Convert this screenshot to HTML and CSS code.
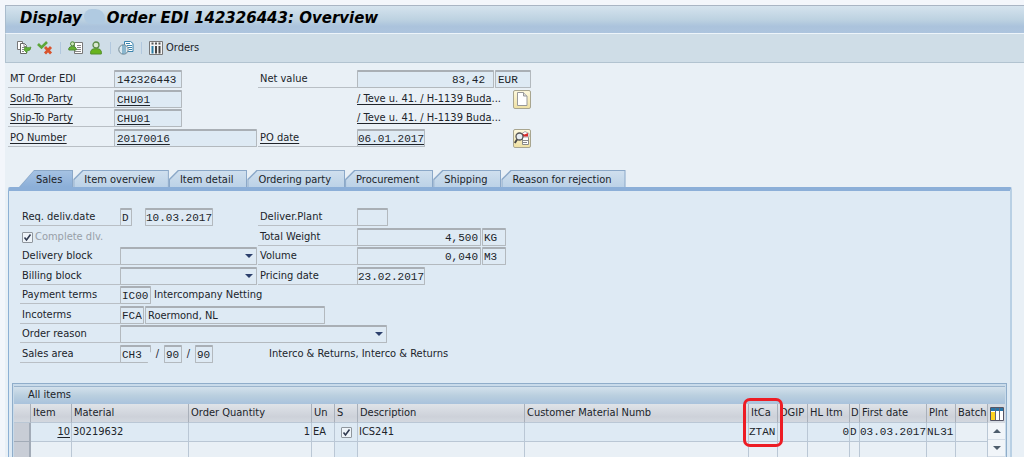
FILE: index.html
```html
<!DOCTYPE html>
<html lang="en">
<head>
<meta charset="utf-8">
<title>Display Order EDI 142326443: Overview</title>
<link rel="stylesheet" href="styles.css">
</head>
<body>
<div class="page">
  <header class="titlebar">
    <h1>Display<span class="blank"></span>Order EDI 142326443: Overview</h1>
  </header>
  <div class="toolbar">
    <button class="tool" type="button" aria-label="Display document flow">
      <svg width="16" height="14" viewBox="0 0 16 14"><path d="M1.500.5h5v8h-5z" fill="#fff" stroke="#777"/><path d="M4.500 2.500h4l2 2v8h-6z" fill="#fff" stroke="#666"/><path d="M8 2.500v3h3M6 6.500h3M6 8.500h3M6 10.500h2" fill="none" stroke="#888"/><path d="M9 6q4 1 6 0 0 4-4 4v2L8 9z" fill="#5fae35" stroke="#4a8c2b" stroke-width=".6"/></svg>
    </button>
    <button class="tool" type="button" aria-label="Reject items">
      <svg width="16" height="14" viewBox="0 0 16 14"><path d="M1 3l3.500 3.500L10 1" fill="none" stroke="#5da63a" stroke-width="2.600"/><path d="M8 6l6 6.500M14 6l-6 6.500" stroke="#d9532c" stroke-width="2.800"/></svg>
    </button>
    <span class="sep"></span>
    <button class="tool" type="button" aria-label="Header details">
      <svg width="16" height="14" viewBox="0 0 16 14"><path d="M6.500 1.500h8v11h-8z" fill="#fff" stroke="#777"/><path d="M9 4.500h4M9 6.500h4M7 8.500h6M7 10.500h6" stroke="#888"/><circle cx="4.500" cy="2.800" r="2" fill="#cde5bb" stroke="#4e8a37"/><path d="M.8 9V7.500Q1 5.500 4.500 5.500T8.200 7.500V9z" fill="#66b32e" stroke="#4e8a37"/></svg>
    </button>
    <button class="tool" type="button" aria-label="Sold-to party">
      <svg width="14" height="14" viewBox="0 0 14 14"><circle cx="7" cy="4" r="3" fill="#dbe9d0" stroke="#5a8a48" stroke-width="1.300"/><path d="M1.700 13v-2.500Q2.500 7.800 5 7.800h4q2.500 0 3.300 2.700V13z" fill="#69b41e" stroke="#558f2c"/></svg>
    </button>
    <span class="sep"></span>
    <button class="tool" type="button" aria-label="Document overview">
      <svg width="16" height="14" viewBox="0 0 16 14"><path d="M6.500.5h6l2.500 2v8H6.500z" fill="#fff" stroke="#3b84ad"/><path d="M8 2.500h4M9 4.500h5M10 6.500h4M11 8.500h3" stroke="#3b84ad"/><circle cx="5.500" cy="8.500" r="4.700" fill="#dce9ef" stroke="#70848f"/><path d="M5 4v9M7 4.500v8" stroke="#3b84ad"/></svg>
    </button>
    <span class="sep"></span>
    <button class="tool" type="button">
      <svg width="14" height="14" viewBox="0 0 14 14"><path d="M.5.500h13v13H.5z" fill="#f4f4f4" stroke="#777"/><path d="M3.500 5v7.500" stroke="#2b7ca5" stroke-width="2"/><path d="M7 5v7.500M10.500 5v7.500" stroke="#444" stroke-width="2"/><path d="M2.500 2.500h2M6 2.500h2M9.500 2.500h2" stroke="#555" stroke-width="2"/></svg>
      <span>Orders</span>
    </button>
  </div>

  <main class="content">
    <div class="form head-form">
      <label class="lbl c1" for="edi">MT Order EDI</label>
      <div class="val c2"><input class="w68" id="edi" value="142326443" readonly></div>
      <label class="lbl c3" for="net">Net value</label>
      <div class="val c4"><input class="w137 num roomy" id="net" value="83,42" readonly><input class="w36" aria-label="Currency" value="EUR" readonly></div>

      <label class="lbl c1 link" for="sold">Sold-To Party</label>
      <div class="val c2"><input class="w68 link" id="sold" value="CHU01" readonly></div>
      <div class="val c4"><a class="addr" href="#">/ Teve u. 41. / H-1139 Buda</a><span class="dots">...</span>
        <button class="square" type="button" aria-label="Texts"><svg width="12" height="14" viewBox="0 0 12 14"><path d="M1.500.5h6l3.500 3.500v9.500H1.500z" fill="#fff" stroke="#999"/><path d="M7.500.5V4H11" fill="#ddd" stroke="#999"/></svg></button></div>

      <label class="lbl c1 link" for="ship">Ship-To Party</label>
      <div class="val c2"><input class="w68 link" id="ship" value="CHU01" readonly></div>
      <div class="val c4"><a class="addr" href="#">/ Teve u. 41. / H-1139 Buda</a><span class="dots">...</span></div>

      <label class="lbl c1 link" for="pon">PO Number</label>
      <div class="val c2"><input class="w143 link" id="pon" value="20170016" readonly></div>
      <label class="lbl c3 link" for="pod">PO date</label>
      <div class="val c4"><input class="w68 link" id="pod" value="06.01.2017" readonly>
        <button class="square last" type="button" aria-label="Partner details"><svg width="16" height="14" viewBox="0 0 16 14"><path d="M8.500 5.500h6v8h-6z" fill="#fff" stroke="#888"/><path d="M8 6V2.500l3-2 4 2V6z" fill="#fff" stroke="#aaa"/><path d="M7 2l3.500 1.500L14 2v3.500H7z" fill="#d92b2b"/><circle cx="5.500" cy="5.500" r="3.500" fill="#e7edf1" stroke="#555" stroke-width="1.300"/><path d="M3 8.500L.8 12" stroke="#444" stroke-width="2"/><path d="M9 9.500h5M9 11.500h4" stroke="#888"/></svg></button></div>
    </div>

    <nav class="tabs" role="tablist">
      <button class="tab active" role="tab" aria-selected="true" type="button">Sales</button>
      <button class="tab" role="tab" type="button">Item overview</button>
      <button class="tab" role="tab" type="button">Item detail</button>
      <button class="tab" role="tab" type="button">Ordering party</button>
      <button class="tab" role="tab" type="button">Procurement</button>
      <button class="tab" role="tab" type="button">Shipping</button>
      <button class="tab" role="tab" type="button">Reason for rejection</button>
    </nav>

    <section class="panel">
      <div class="form sales-form">
        <label class="lbl c1" for="req">Req. deliv.date</label>
        <div class="val c2"><input class="w12" aria-label="Date type" value="D" readonly><input class="w68 gap-left" id="req" value="10.03.2017" readonly></div>
        <label class="lbl c3" for="plant">Deliver.Plant</label>
        <div class="val c4"><input class="w31" id="plant" readonly></div>

        <label class="check c1"><input type="checkbox" checked disabled>Complete dlv.</label>
        <label class="lbl c3" for="weight">Total Weight</label>
        <div class="val c4"><input class="w124 num" id="weight" value="4,500" readonly><input class="w24" aria-label="Weight unit" value="KG" readonly></div>

        <label class="lbl c1" for="dblock">Delivery block</label>
        <div class="val c2"><select class="w137" id="dblock"><option></option></select></div>
        <label class="lbl c3" for="vol">Volume</label>
        <div class="val c4"><input class="w124 num" id="vol" value="0,040" readonly><input class="w24" aria-label="Volume unit" value="M3" readonly></div>

        <label class="lbl c1" for="bblock">Billing block</label>
        <div class="val c2"><select class="w137" id="bblock"><option></option></select></div>
        <label class="lbl c3" for="pdate">Pricing date</label>
        <div class="val c4"><input class="w68" id="pdate" value="23.02.2017" readonly></div>

        <label class="lbl c1" for="pay">Payment terms</label>
        <div class="val wide"><input class="w31" id="pay" value="IC00" readonly><span class="note">Intercompany Netting</span></div>

        <label class="lbl c1" for="inco">Incoterms</label>
        <div class="val wide"><input class="w24" id="inco" value="FCA" readonly><input class="w180 sans" aria-label="Incoterms location" value="Roermond, NL" readonly></div>

        <label class="lbl c1" for="reason">Order reason</label>
        <div class="val wide"><select class="w267" id="reason"><option></option></select></div>

        <label class="lbl c1" for="area">Sales area</label>
        <div class="val wide"><input class="w31 cut" id="area" value="CH3" readonly><span class="slash">/</span><input class="w18" aria-label="Distribution channel" value="90" readonly><span class="slash">/</span><input class="w18" aria-label="Division" value="90" readonly><span class="area-text">Interco &amp; Returns, Interco &amp; Returns</span></div>
      </div>

      <section class="items">
        <h2>All items</h2>
        <div class="grid-wrap">
          <table>
            <colgroup><col class="k17"><col class="k41"><col class="k117"><col class="k123"><col class="k23"><col class="k23"><col class="k167"><col><col class="k29"><col class="k30"><col class="k42"><col class="k10"><col class="k67"><col class="k29"><col class="k32"></colgroup>
            <thead>
              <tr><th class="sel"></th><th>Item</th><th>Material</th><th>Order Quantity</th><th>Un</th><th>S</th><th>Description</th><th>Customer Material Numb</th><th class="marked">ItCa<span class="mark"></span></th><th>DGIP</th><th>HL Itm</th><th class="tight">D</th><th>First date</th><th>Plnt</th><th>Batch</th></tr>
            </thead>
            <tbody>
              <tr><td class="sel"></td><td class="num"><a href="#">10</a></td><td>30219632</td><td class="num">1</td><td>EA</td><td class="mid"><input type="checkbox" aria-label="Status" checked></td><td>ICS241</td><td></td><td class="mono">ZTAN</td><td></td><td class="num mono">0</td><td class="mono">D</td><td class="mono">03.03.2017</td><td class="mono">NL31</td><td class="pale"></td></tr>
              <tr class="empty"><td class="sel"></td><td></td><td></td><td></td><td></td><td class="status"></td><td></td><td></td><td></td><td></td><td></td><td></td><td></td><td></td><td></td></tr>
            </tbody>
          </table>
          <div class="scroller">
            <button class="config" type="button" aria-label="Table settings"><svg width="14" height="14" viewBox="0 0 14 14"><path d="M.5.500h13v13H.5z" fill="#fff" stroke="#556"/><path d="M1 1h12v3H1z" fill="#2774a6"/><path d="M1 5h4v8H1z" fill="#ffd21f"/><path d="M5.500 1v12M9.500 1v12" stroke="#667"/></svg></button>
            <button class="arrow" type="button" aria-label="Scroll up"><svg width="8" height="4" viewBox="0 0 8 4"><path d="M4 0l4 4H0z" fill="#4e5d6c"/></svg></button>
            <button class="arrow" type="button" aria-label="Scroll down"><svg width="8" height="4" viewBox="0 0 8 4"><path d="M0 0h8L4 4z" fill="#4e5d6c"/></svg></button>
          </div>
        </div>
      </section>
    </section>
  </main>
</div>
</body>
</html>
```

FILE: styles.css
```css
* { box-sizing: border-box; }
body {
  margin: 0;
  background: #f3f6fb;
  color: #20242a;
  font-family: "DejaVu Sans Condensed", "DejaVu Sans", Tahoma, sans-serif;
  font-size: 11px;
  line-height: 14px;
}
button, input, select { font: inherit; color: inherit; margin: 0; }
button { border: 0; background: none; padding: 0; }
svg { display: block; }

.page {
  display: flex;
  flex-direction: column;
  min-height: 100vh;
  padding: 5px 0 0 5px;
}
.titlebar {
  height: 28px;
  padding: 0 14px;
  border-top: 1px solid #a9b5c4;
  border-left: 1px solid #a9bccd;
  background: linear-gradient(#d5e3ee, #bdd2e1 50%, #abc3dc 75%, #adc4de);
}
h1 {
  margin: 0;
  font-family: "DejaVu Sans", Verdana, sans-serif;
  font-size: 15px;
  line-height: 25px;
  font-style: italic;
  font-weight: bold;
  color: #000;
  white-space: nowrap;
}
.blank {
  display: inline-block;
  width: 21px;
  height: 15px;
  margin: 0 2px 4px;
  vertical-align: middle;
  border-radius: 8px 10px 4px 8px;
  background: #b0cae1;
}
.toolbar {
  display: flex;
  align-items: center;
  gap: 5px;
  height: 30px;
  padding: 0 10px;
  border-top: 1px solid #edf4fa;
  border-bottom: 1px solid #b2c3d0;
  border-left: 1px solid #b2c3d0;
  background: #cfdde7;
}
.tool { display: flex; align-items: center; gap: 3px; }
.sep { width: 1px; height: 12px; margin: 0 2px; background: #b2c8de; }

.content {
  display: flex;
  flex-direction: column;
  flex: 1;
  padding: 7px 12px 0 3px;
  background: #e9f0f6;
}
.form { display: grid; grid-auto-rows: 20px 19px; align-items: start; }
.head-form { grid-template-columns: 106px 144px 99px 1fr; }
.sales-form { grid-template-columns: 100px 138px 99px 1fr; padding: 17px 0 0 11px; }
.c1 { grid-column: 1; }
.c2 { grid-column: 2; }
.c3 { grid-column: 3; }
.c4 { grid-column: 4; }
.wide { grid-column: 2 / 5; }
.lbl {
  height: 18px;
  padding: 2px 2px 0;
  border-bottom: 1px solid #b9bfc5;
  white-space: nowrap;
}
.link { text-decoration: underline; text-underline-offset: 2px; }
.val { display: flex; align-items: center; gap: 1px; height: 18px; white-space: nowrap; }
.form input:not([type="checkbox"]), select {
  height: 18px;
  padding: 0 2px;
  border: 1px solid #b3b9be;
  border-top: 2px solid #a9afb5;
  border-radius: 1px;
  background-color: #deeaf4;
  font-family: "Liberation Mono", "Courier New", monospace;
}
.form input.sans { font-family: inherit; }
.form input.roomy { padding-right: 8px; }
.num { text-align: right; }
select {
  appearance: none;
  background: url("data:image/svg+xml,%3Csvg xmlns='http://www.w3.org/2000/svg' width='8' height='4'%3E%3Cpath d='M0 0h8L4 4z' fill='%232c406c'/%3E%3C/svg%3E") no-repeat right 3px top 5px;
}
.w12 { width: 12px; }
.w18 { width: 18px; }
.w24 { width: 24px; }
.w31 { width: 31px; }
.w36 { width: 36px; }
.w68 { width: 68px; }
.w124 { width: 124px; }
.w137 { width: 137px; }
.w143 { width: 143px; }
.w180 { width: 180px; }
.w267 { width: 267px; }
.form input.w12, .form input.w18, .form input.w24, .form input.w31 { padding: 0 1px; }
.form input.w68 { padding: 0; text-indent: 0; }
.form #edi, .form #sold, .form #ship { padding-left: 2px; }
.gap-left { margin-left: 12px; }
.cut { clip-path: polygon(0 0, 100% 0, 100% 40%, 90% 40%, 90% 100%, 0 100%); }
.addr { color: inherit; text-underline-offset: 2px; }
.dots { margin-left: -1px; }
.square {
  display: grid;
  place-items: center;
  width: 18px;
  height: 19px;
  margin-left: 11px;
  border: 1px solid #a8a58f;
  border-radius: 2px;
  background: linear-gradient(#fdf8dc, #efe1a4);
}
.square.last { margin-left: 87px; }
.note { padding-left: 2px; }
.slash { width: 11px; text-align: center; }
.area-text { padding-left: 55px; }
.check { display: flex; align-items: center; gap: 2px; height: 18px; padding-left: 2px; color: #98a0a8; white-space: nowrap; }
input[type="checkbox"] {
  appearance: none;
  flex: none;
  width: 11px;
  height: 11px;
  border: 1px solid #8f969d;
  border-radius: 1px;
  background: #eef4f9 url("data:image/svg+xml,%3Csvg xmlns='http://www.w3.org/2000/svg' width='9' height='9'%3E%3Cpath d='M1.500 4.500l2 2.500 4-5.500' fill='none' stroke='%23303a50' stroke-width='1.600'/%3E%3C/svg%3E") no-repeat center;
}

.tabs { display: flex; height: 17px; margin-top: 22px; padding-left: 11px; }
.tab {
  position: relative;
  isolation: isolate;
  padding: 1px 14px 0 11px;
  background: #8ba8c8;
  clip-path: polygon(0 9px, 9px 0, 100% 0, 100% 100%, 0 100%);
  line-height: 17px;
  white-space: nowrap;
}
.tab::before {
  content: "";
  position: absolute;
  inset: 1px 1px 0 1px;
  z-index: -1;
  background: linear-gradient(#cfdfee, #bcd2e7);
  clip-path: polygon(0 9px, 9px 0, 100% 0, 100% 100%, 0 100%);
}
.tab.active { padding: 1px 11px 0 17px; clip-path: polygon(0 100%, 15px 0, 100% 0, 100% 100%); }
.tab.active::before { background: linear-gradient(#a5c2e3, #8cafd8); clip-path: polygon(0 100%, 14px 0, 100% 0, 100% 100%); }

.panel {
  display: flex;
  flex-direction: column;
  flex: 1;
  padding: 0 3px 0 0;
  border-top: 4px solid #8cafd8;
  border-left: 1px solid #8db0d4;
  border-right: 2px solid #b9d0e4;
  border-radius: 2px 2px 0 0;
  background: #deeaf4;
}
.items {
  flex: 1;
  margin: 19px 0 0 3px;
  padding: 2px 1px 0;
  border: 1px solid #8fadca;
  border-bottom: 0;
  background: #c9dbea;
}
h2 {
  height: 18px;
  margin: 0;
  padding: 0 14px;
  border-top: 1px solid #9cb5cd;
  background: linear-gradient(#d3e1ec, #bacfdf 50%, #a9c2dc);
  font-size: 11px;
  font-weight: normal;
  line-height: 15px;
}
.grid-wrap { display: flex; background: #e9f0f6; }
table { flex: 1; width: 100%; min-width: 0; table-layout: fixed; border-collapse: separate; border-spacing: 0; }
th, td {
  height: 19px;
  padding: 0 1px;
  border-right: 1px solid #bac7d5;
  border-bottom: 1px solid #bac7d5;
  white-space: nowrap;
  text-align: left;
  font-weight: normal;
}
th { padding: 0 2px; border-right-color: #a9b0ba; background: linear-gradient(#dfe3e8, #cdd1d9 70%, #d3d8df); }
th.tight { padding: 0 1px; }
td { background: #deeaf4; }
td.num { text-align: right; }
td.mid { text-align: center; }
td.mid input { vertical-align: middle; }
td a { color: inherit; text-underline-offset: 2px; }
.mono { padding: 0; font-family: "Liberation Mono", "Courier New", monospace; }
td.pale, .empty td { background: #e9f0f6; }
.empty td { height: 17px; border-bottom: 0; }
td.sel, .empty td.sel { background: #c8cdd6; border-right: 2px solid #a2abb7; border-bottom: 1px solid #a2abb7; }
.empty td.status { background: #deeaf4; }
.marked { position: relative; }
.mark {
  position: absolute;
  top: -6px;
  left: -6px;
  width: 40px;
  height: 49px;
  border: 3px solid #ed1c24;
  border-radius: 7px;
}
.k10 { width: 10px; }
.k17 { width: 17px; }
.k23 { width: 23px; }
.k29 { width: 29px; }
.k30 { width: 30px; }
.k32 { width: 32px; }
.k41 { width: 41px; }
.k42 { width: 42px; }
.k67 { width: 67px; }
.k117 { width: 117px; }
.k123 { width: 123px; }
.k167 { width: 167px; }
.scroller { flex: none; width: 17px; }
.config, .arrow { display: grid; place-items: center; width: 17px; }
.config { height: 19px; background: #d5dae1; }
.arrow { height: 17px; background: #f1f5f9; border-bottom: 1px solid #d5dde6; }
```
